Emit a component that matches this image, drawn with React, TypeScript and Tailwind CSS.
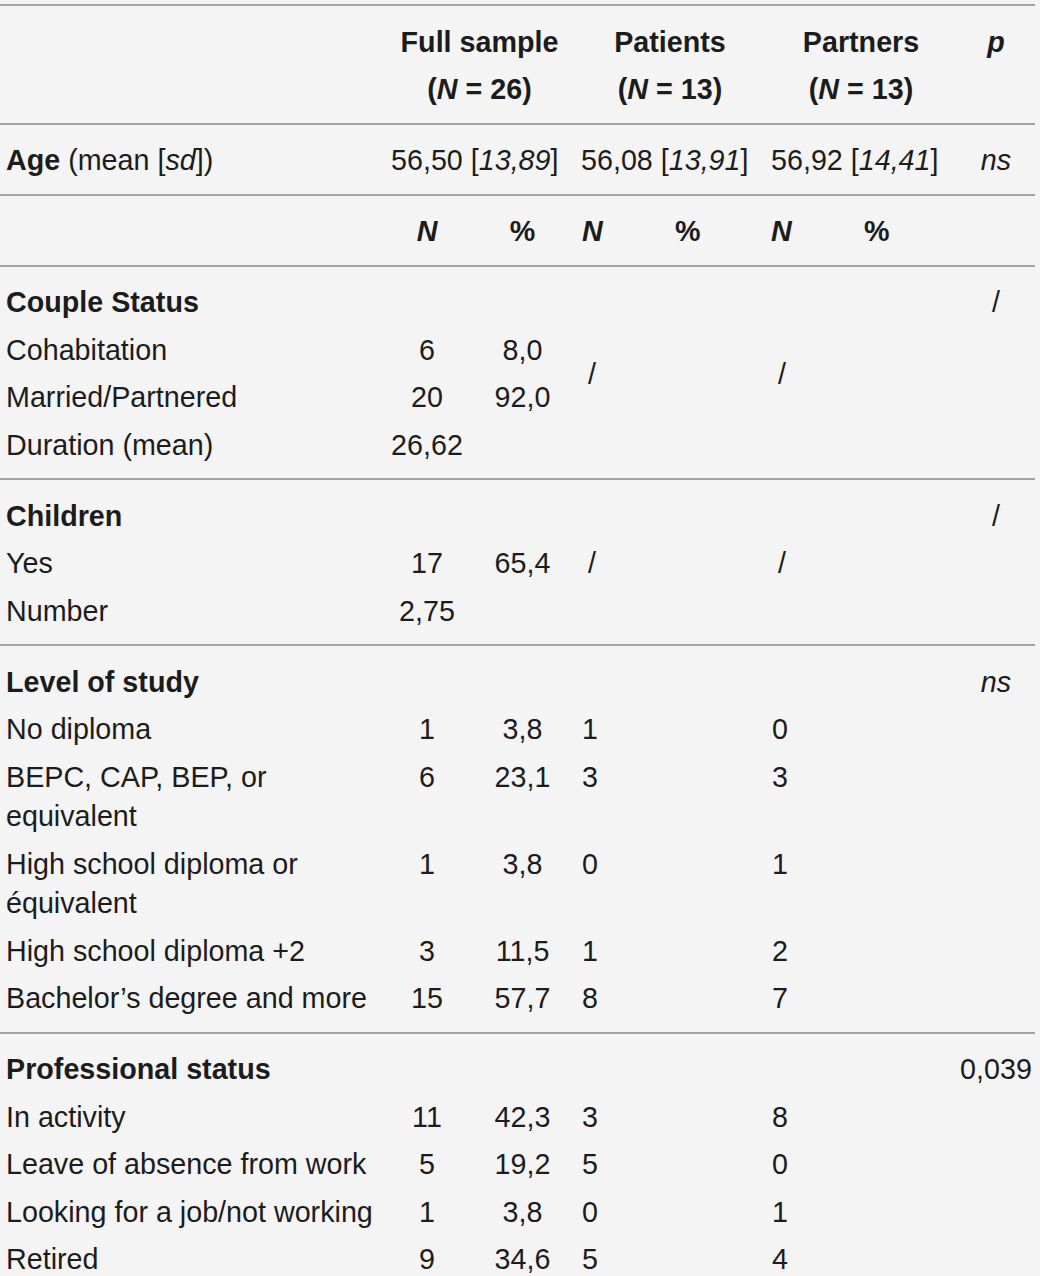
import type { ReactNode } from 'react'

const section =
  'grid grid-cols-[384px_86px_105px_93px_97px_92px_100px_78px] border-t-2 border-[#a3a3a3] py-[10.75px]'
const cell = 'pt-[6px] pb-[2px] leading-[39.5px] whitespace-nowrap'

function Row({
  label,
  n,
  pct,
  pa,
  pr,
  p,
  bold,
}: {
  label: ReactNode
  n?: string
  pct?: string
  pa?: string
  pr?: string
  p?: ReactNode
  bold?: boolean
}) {
  return (
    <>
      <div className={`${cell} col-start-1 pl-[6px] ${bold ? 'font-bold' : ''}`}>{label}</div>
      {n && <div className={`${cell} col-start-2 text-center`}>{n}</div>}
      {pct && <div className={`${cell} col-start-3 text-center`}>{pct}</div>}
      {pa && <div className={`${cell} col-start-4 ${pa === '/' ? 'pl-[13px]' : 'pl-[7px]'}`}>{pa}</div>}
      {pr && <div className={`${cell} col-start-6 ${pr === '/' ? 'pl-[13px]' : 'pl-[7px]'}`}>{pr}</div>}
      {p && <div className={`${cell} col-start-8 text-center`}>{p}</div>}
    </>
  )
}

function Slash({ col }: { col: 'pa' | 'pr' }) {
  return (
    <div
      className={`${cell} row-span-2 flex items-center pl-[13px] ${col === 'pa' ? 'col-start-4' : 'col-start-6'}`}
    >
      /
    </div>
  )
}

export default function App() {
  return (
    <div className="min-h-screen bg-[#f4f4f4] pt-[4px] font-['Liberation_Sans',Arial,sans-serif] text-[28.7px] text-[#1c1c1c]">
      <div className="w-[1035px] border-b-2 border-[#a3a3a3]">
        {/* header */}
        <div className={section}>
          <div className={`${cell} col-start-2 col-span-2 text-center font-bold`}>Full sample</div>
          <div className={`${cell} col-start-4 col-span-2 text-center font-bold`}>Patients</div>
          <div className={`${cell} col-start-6 col-span-2 text-center font-bold`}>Partners</div>
          <div className={`${cell} col-start-8 text-center font-bold italic`}>p</div>
          <div className={`${cell} col-start-2 col-span-2 text-center font-bold`}>
            (<i>N</i> = 26)
          </div>
          <div className={`${cell} col-start-4 col-span-2 text-center font-bold`}>
            (<i>N</i> = 13)
          </div>
          <div className={`${cell} col-start-6 col-span-2 text-center font-bold`}>
            (<i>N</i> = 13)
          </div>
        </div>

        {/* age */}
        <div className={section}>
          <div className={`${cell} col-start-1 pl-[6px]`}>
            <b>Age</b> (mean [<i>sd</i>])
          </div>
          <div className={`${cell} col-start-2 col-span-2 pl-[7px]`}>
            56,50 [<i>13,89</i>]
          </div>
          <div className={`${cell} col-start-4 col-span-2 pl-[6px]`}>
            56,08 [<i>13,91</i>]
          </div>
          <div className={`${cell} col-start-6 col-span-2 pl-[6px]`}>
            56,92 [<i>14,41</i>]
          </div>
          <div className={`${cell} col-start-8 text-center italic`}>ns</div>
        </div>

        {/* N / % */}
        <div className={`${section} font-bold`}>
          <div className={`${cell} col-start-2 text-center italic`}>N</div>
          <div className={`${cell} col-start-3 text-center`}>%</div>
          <div className={`${cell} col-start-4 pl-[7px] italic`}>N</div>
          <div className={`${cell} col-start-5 pl-[7px]`}>%</div>
          <div className={`${cell} col-start-6 pl-[6px] italic`}>N</div>
          <div className={`${cell} col-start-7 pl-[7px]`}>%</div>
        </div>

        {/* couple status */}
        <div className={section}>
          <Row label="Couple Status" bold p="/" />
          <Row label="Cohabitation" n="6" pct="8,0" />
          <Slash col="pa" />
          <Slash col="pr" />
          <Row label="Married/Partnered" n="20" pct="92,0" />
          <Row label="Duration (mean)" n="26,62" />
        </div>

        {/* children */}
        <div className={section}>
          <Row label="Children" bold p="/" />
          <Row label="Yes" n="17" pct="65,4" pa="/" pr="/" />
          <Row label="Number" n="2,75" />
        </div>

        {/* level of study */}
        <div className={section}>
          <Row label="Level of study" bold p={<i>ns</i>} />
          <Row label="No diploma" n="1" pct="3,8" pa="1" pr="0" />
          <Row
            label={
              <>
                BEPC, CAP, BEP, or
                <br />
                equivalent
              </>
            }
            n="6"
            pct="23,1"
            pa="3"
            pr="3"
          />
          <Row
            label={
              <>
                High school diploma or
                <br />
                équivalent
              </>
            }
            n="1"
            pct="3,8"
            pa="0"
            pr="1"
          />
          <Row label="High school diploma +2" n="3" pct="11,5" pa="1" pr="2" />
          <Row label="Bachelor’s degree and more" n="15" pct="57,7" pa="8" pr="7" />
        </div>

        {/* professional status */}
        <div className={section}>
          <Row label="Professional status" bold p="0,039" />
          <Row label="In activity" n="11" pct="42,3" pa="3" pr="8" />
          <Row label="Leave of absence from work" n="5" pct="19,2" pa="5" pr="0" />
          <Row label="Looking for a job/not working" n="1" pct="3,8" pa="0" pr="1" />
          <Row label="Retired" n="9" pct="34,6" pa="5" pr="4" />
        </div>
      </div>
    </div>
  )
}
